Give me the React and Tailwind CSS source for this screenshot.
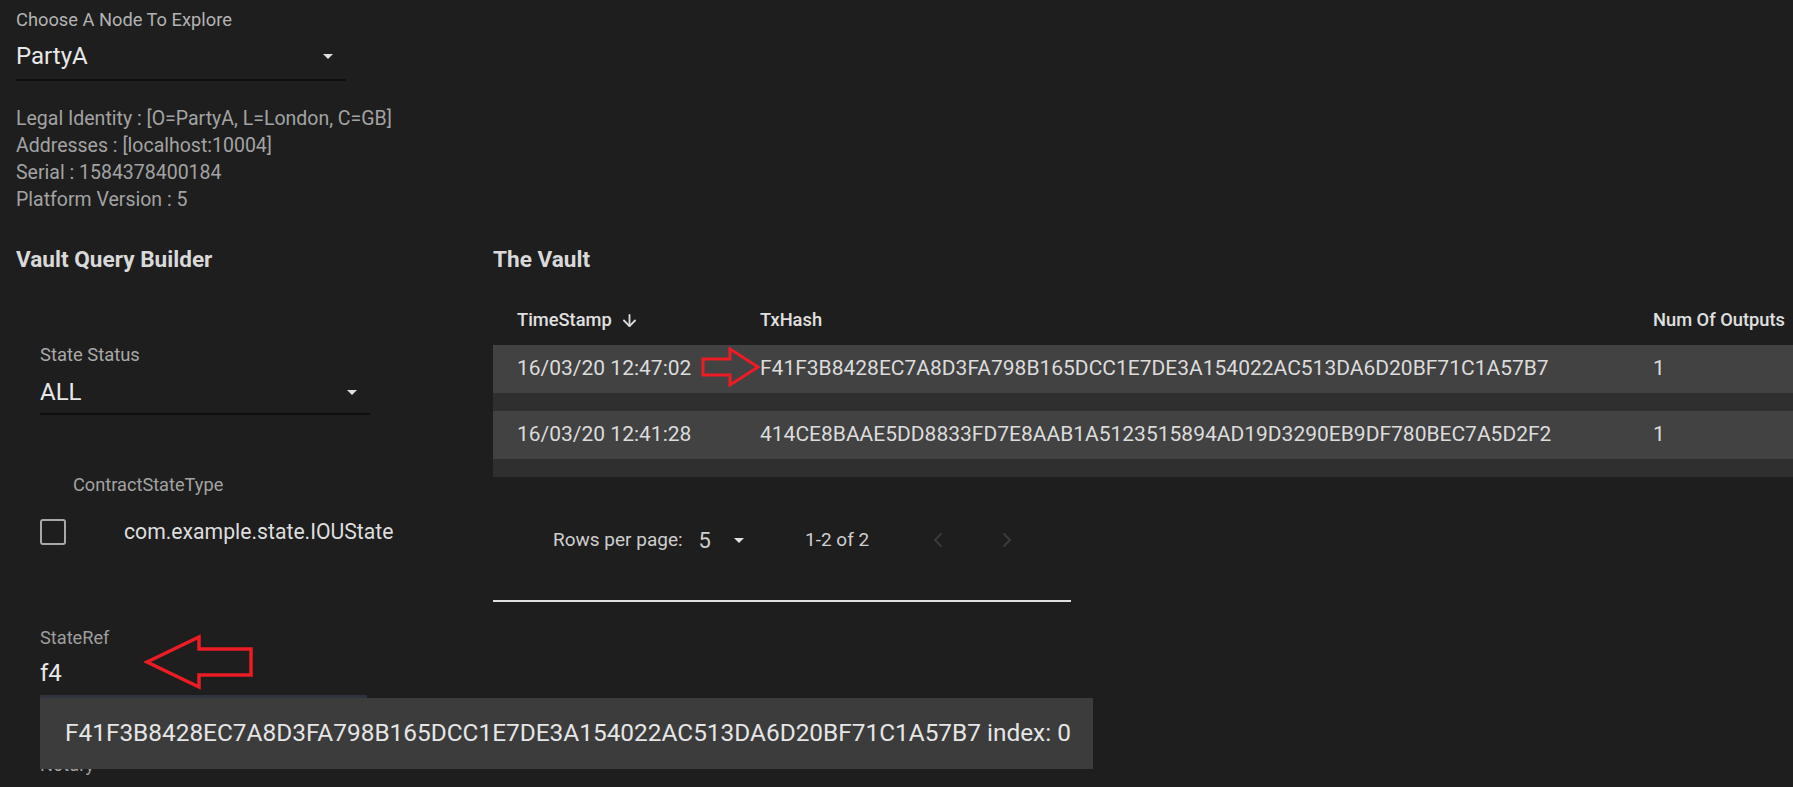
import React from 'react';
import { ArrowDown, ChevronLeft, ChevronRight } from 'lucide-react';

const node = {
    name: 'PartyA',
    info: [
        'Legal Identity : [O=PartyA, L=London, C=GB]',
        'Addresses : [localhost:10004]',
        'Serial : 1584378400184',
        'Platform Version : 5',
    ],
};

const rows = [
    { time: '16/03/20 12:47:02', hash: 'F41F3B8428EC7A8D3FA798B165DCC1E7DE3A154022AC513DA6D20BF71C1A57B7', outputs: 1 },
    { time: '16/03/20 12:41:28', hash: '414CE8BAAE5DD8833FD7E8AAB1A5123515894AD19D3290EB9DF780BEC7A5D2F2', outputs: 1 },
];

const Caret = () => (
    <svg width="10" height="5" viewBox="0 0 10 5" className="shrink-0">
        <path d="M0 0h10L5 5z" fill="#e0e0e0" />
    </svg>
);

// red annotation arrows drawn on top of the screenshot
const RightArrow = () => (
    <svg width="60" height="40" viewBox="0 0 60 40" className="absolute left-[208px] top-[2px] z-10">
        <polygon points="2,12 29,12 29,2 57,20 29,38 29,28 2,28" fill="none" stroke="#ec1c24" strokeWidth="3" strokeLinejoin="miter" />
    </svg>
);

const LeftArrow = () => (
    <svg width="110" height="56" viewBox="0 0 110 56" className="absolute left-[104px] top-[8px] z-10">
        <polygon points="3,28 55,3 55,15 107,15 107,41 55,41 55,53" fill="none" stroke="#ec1c24" strokeWidth="3.5" strokeLinejoin="miter" />
    </svg>
);

const App = () => {
    return (
        <div className="min-h-screen w-full overflow-hidden bg-[#1e1e1e] pl-4 font-['Roboto',sans-serif]">
            {/* Node chooser */}
            <div className="pt-[8px]">
                <div className="h-[23px] text-[18.3px] leading-[23px] text-[#b3b3b3]">Choose A Node To Explore</div>
                <div className="mt-[8px] w-[330px] border-b-2 border-[#0f0f0f] pb-[6px]">
                    <div className="flex h-[34px] items-center justify-between pr-[13px]">
                        <span className="text-[24px] text-[#e8e8e8]">{node.name}</span>
                        <Caret />
                    </div>
                </div>
                <div className="mt-[24px] text-[19.5px] leading-[27px] text-[#a3a3a3]">
                    {node.info.map((line) => (
                        <div key={line}>{line}</div>
                    ))}
                </div>
            </div>

            <div className="mt-[33px] flex">
                {/* Vault Query Builder */}
                <div className="w-[477px] shrink-0">
                    <h2 className="h-[28px] text-[22.6px] font-bold leading-[28px] text-[#d9d9d9]">Vault Query Builder</h2>

                    <div className="pl-6">
                        <div className="mt-[69px] h-[24px] text-[18.4px] leading-[24px] text-[#a9a9a9]">State Status</div>
                        <div className="mt-[8px] w-[330px] border-b-2 border-[#0f0f0f] pb-[4px]">
                            <div className="flex h-[34px] items-center justify-between pr-[13px]">
                                <span className="text-[24px] text-[#e8e8e8]">ALL</span>
                                <Caret />
                            </div>
                        </div>

                        <div className="mt-[58px] h-[24px] pl-[33px] text-[18.2px] leading-[24px] text-[#a3a3a3]">ContractStateType</div>
                        <div className="mt-[15px] flex h-[40px] items-center">
                            <div className="h-[26px] w-[26px] shrink-0 rounded-[3px] border-2 border-[#a8a8a8]" />
                            <span className="ml-[58px] text-[21.2px] text-[#dedede]">com.example.state.IOUState</span>
                        </div>

                        <div className="relative mt-[74px]">
                            <LeftArrow />
                            <div className="h-[24px] text-[18.2px] leading-[24px] text-[#9e9e9e]">StateRef</div>
                            <div className="mt-[6px] w-[327px] border-b-[3px] border-[#2f333d] pb-[5px]">
                                <div className="flex h-[34px] items-center text-[24px] text-[#e8e8e8]">f4</div>
                            </div>
                            <div className="absolute left-0 top-full z-20 flex h-[71px] w-[1053px] items-center bg-[#3c3c3c] pl-[25px] text-[24.4px] text-[#e6e6e6]">
                                {rows[0].hash} index: 0
                            </div>
                        </div>

                        <div className="mt-[55px] h-[24px] text-[18.2px] leading-[24px] text-[#a3a3a3]">Notary</div>
                    </div>
                </div>

                {/* The Vault */}
                <div className="min-w-0 flex-1">
                    <h2 className="h-[28px] text-[22.6px] font-bold leading-[28px] text-[#d9d9d9]">The Vault</h2>

                    <div className="mt-[21px] w-[1436px]">
                        <div className="flex h-[50px] items-center text-[18.3px] font-medium text-[#e0e0e0]">
                            <div className="flex w-[243px] items-center gap-[8px] pl-6">
                                TimeStamp
                                <ArrowDown size={19} strokeWidth={2.3} color="#dcdcdc" />
                            </div>
                            <div className="w-[893px] pl-6">TxHash</div>
                            <div className="flex-1 pl-6">Num Of Outputs</div>
                        </div>
                        <div className="bg-[#2f2f2f]">
                            {rows.map((row, i) => (
                                <div key={row.hash} className="pb-[18px]">
                                    <div className="relative flex h-[48px] items-center bg-[#424242] text-[21px] text-[#dcdcdc]">
                                        {i === 0 && <RightArrow />}
                                        <div className="w-[243px] pl-6">{row.time}</div>
                                        <div className="w-[893px] pl-6">{row.hash}</div>
                                        <div className="flex-1 pl-6">{row.outputs}</div>
                                    </div>
                                </div>
                            ))}
                        </div>
                    </div>

                    {/* Pagination */}
                    <div className="mt-[38px] flex h-[50px] w-[578px] items-center pl-[60px] text-[19px] text-[#cfcfcf]">
                        <span>Rows per page:</span>
                        <span className="ml-[16px] text-[22px]">5</span>
                        <span className="ml-[23px]"><Caret /></span>
                        <span className="ml-[61px]">1-2 of 2</span>
                        <ChevronLeft size={24} color="#3a3a3a" className="ml-[57px]" />
                        <ChevronRight size={24} color="#3a3a3a" className="ml-[45px]" />
                    </div>
                    <div className="mt-[35px] h-[2px] w-[578px] bg-[#e0e0e0]" />
                </div>
            </div>
        </div>
    );
};

export default App;
